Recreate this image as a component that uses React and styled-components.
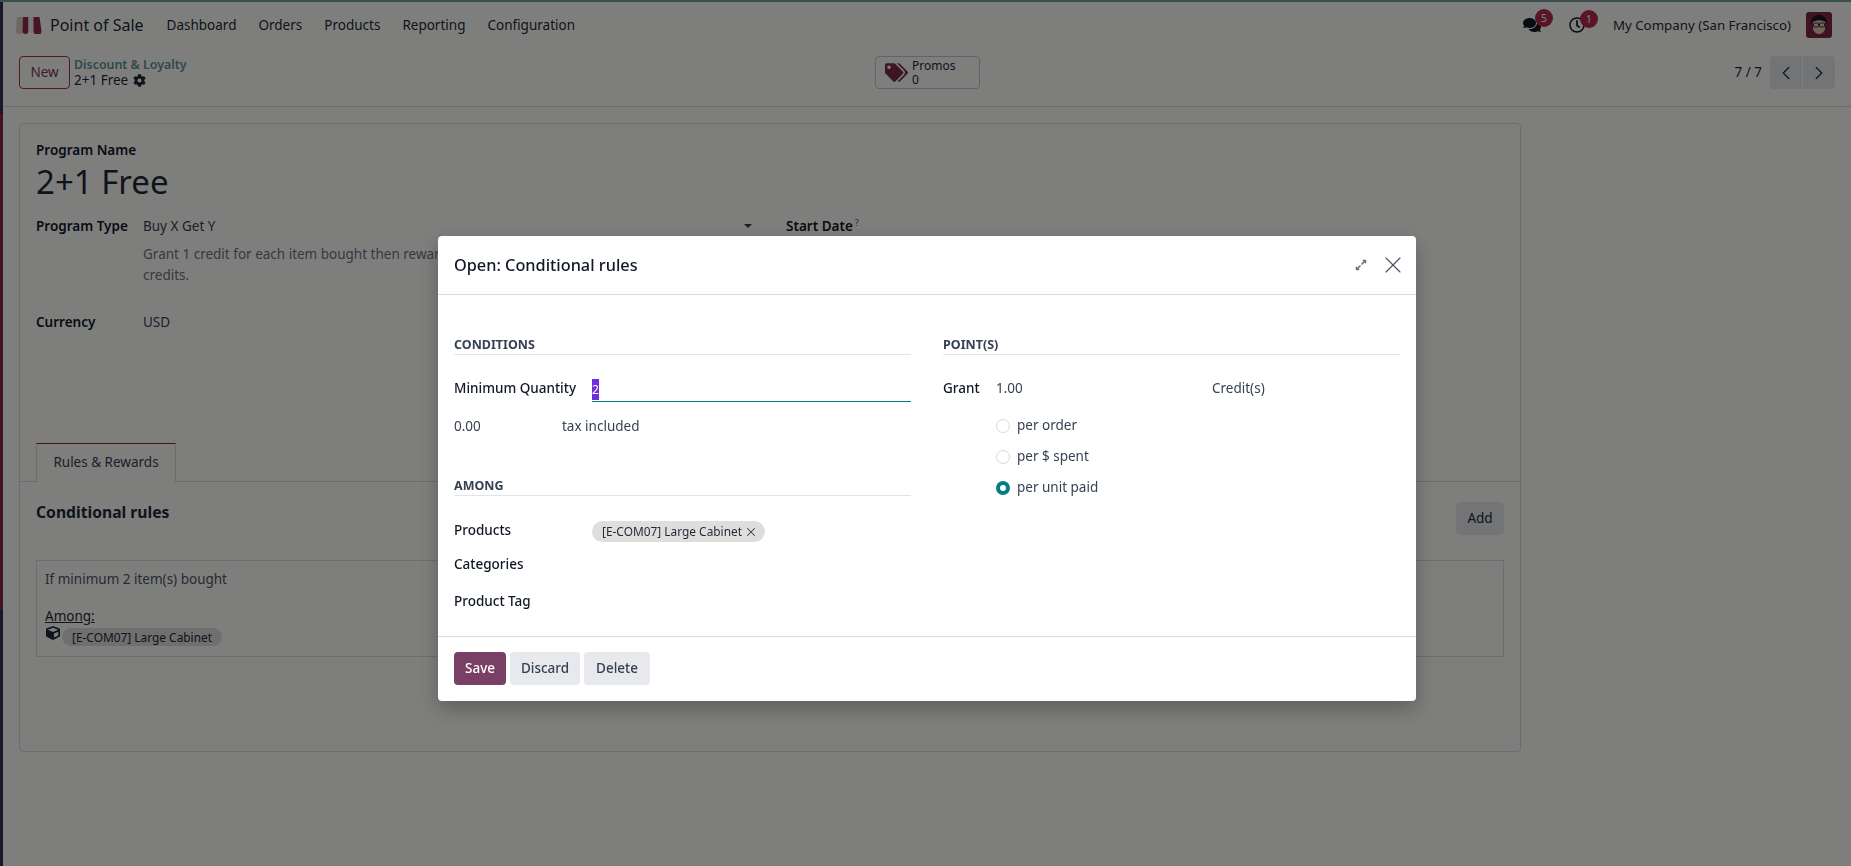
import styled, { createGlobalStyle } from 'styled-components';
import { FaComments, FaRegClock, FaCog, FaTags, FaCube, FaExpandAlt } from 'react-icons/fa';
import { ChevronLeft, ChevronRight, X } from 'lucide-react';

const GlobalStyle = createGlobalStyle`
  html, body {
    margin: 0;
    height: 100%;
    overflow: hidden;
    background: #fdfffb;
    font-family: "Noto Sans", "Open Sans", sans-serif;
    font-size: 13.5px;
    line-height: 21px;
    color: #374151;
  }
  * { box-sizing: border-box; }
`;

const Page = styled.div`
  width: 1851px;
  height: 866px;
  border-left: 3px solid;
  border-image: linear-gradient(#30305a 0 115px, #802545 115px 610px, #30305a 610px) 1;
  position: relative;
`;

const TopStripe = styled.div`
  height: 2px;
  margin-left: -3px;
  background: #7c9c9c;
`;

const Navbar = styled.nav`
  height: 46px;
  display: flex;
  align-items: center;
  padding-left: 12px;
  padding-right: 19px;
`;

const Brand = styled.div`
  display: flex;
  align-items: center;
  gap: 8px;
  font-size: 16px;
  color: #1f2937;
  margin-right: 23px;
`;

const MenuItem = styled.span`
  margin-right: 22px;
  color: #1f2937;
`;

const NavRight = styled.div`
  margin-left: auto;
  display: flex;
  align-items: center;
`;

const NavIcon = styled.span`
  position: relative;
  display: flex;
  color: #111827;
  margin-right: ${(p) => p.$gap}px;
`;

const Badge = styled.span`
  position: absolute;
  top: -7px;
  left: ${(p) => p.$left}px;
  width: 18px;
  height: 18px;
  border-radius: 50%;
  background: #b02a50;
  color: #fff;
  font-size: 10px;
  line-height: 18px;
  text-align: center;
`;

const CompanyName = styled.span`
  color: #1f2937;
  margin-right: 15px;
  font-size: 13.3px;
`;

const ControlPanel = styled.div`
  height: 59px;
  display: grid;
  grid-template-columns: 856px 1fr auto;
  align-items: start;
  padding: 8px 16px 0 16px;
  border-bottom: 1px solid #d8dadd;
`;

const Crumbs = styled.div`
  display: flex;
  gap: 4px;
`;

const NewButton = styled.button`
  width: 51px;
  height: 33px;
  border: 1px solid #a83058;
  border-radius: 4px;
  background: none;
  color: #7a3454;
  font: inherit;
  padding: 0;
`;

const CrumbText = styled.div`
  font-size: 13.5px;
  line-height: 16px;
  padding-top: 1px;
`;

const CrumbLink = styled.div`
  color: #5f8f9a;
  font-weight: 600;
  font-size: 12.4px;
`;

const CrumbCurrent = styled.div`
  display: flex;
  align-items: center;
  gap: 5px;
  margin-top: -1px;
  color: #1f2937;
`;

const PromosButton = styled.div`
  width: 105px;
  height: 33px;
  border: 1px solid #c4c7cc;
  border-radius: 4px;
  display: flex;
  align-items: center;
  gap: 4px;
  padding-left: 9px;
  color: #1f2937;
  font-size: 12px;
  line-height: 14px;
`;

const PromosIcon = styled(FaTags)`
  color: #7a2a4a;
  font-size: 23px;
`;

const Pager = styled.div`
  display: flex;
  align-items: center;
  gap: 1px;
  color: #1f2937;
`;

const PagerCount = styled.span`
  margin-right: 7px;
`;

const PagerButton = styled.div`
  width: 32px;
  height: 33px;
  background: #e7e9ed;
  display: flex;
  align-items: center;
  justify-content: center;
  border-radius: ${(p) => p.$radius};
  color: #1f2937;
`;

const Content = styled.div`
  padding: 16px 0 0 16px;
`;

const Sheet = styled.div`
  width: 1502px;
  height: 629px;
  border: 1px solid #d8dadd;
  border-radius: 4px;
`;

const SheetHead = styled.div`
  padding: 16px 16px 0;
`;

const FieldLabel = styled.div`
  font-weight: 600;
  color: #111827;
  line-height: 20px;
`;

const Title = styled.div`
  font-size: 33px;
  line-height: 45px;
  margin-top: -1px;
  color: #1f2937;
`;

const FormGrid = styled.div`
  display: grid;
  grid-template-columns: 107px 612px 31px 1fr;
  margin-top: 12px;
`;

const Muted = styled.div`
  color: #6b7280;
  margin-top: 8px;
  grid-column: 2 / 5;
  max-width: 600px;
`;

const SelectValue = styled.div`
  display: flex;
  justify-content: space-between;
  align-items: center;
  line-height: 20px;
  color: #374151;
`;

const Caret = styled.span`
  width: 0;
  height: 0;
  border-left: 4px solid transparent;
  border-right: 4px solid transparent;
  border-top: 4px solid #374151;
  margin-right: 3px;
`;

const HelpMark = styled.span`
  font-size: 9px;
  font-weight: 400;
  line-height: 0;
  vertical-align: 5px;
  color: #4b5563;
  margin-left: 2px;
`;

const CurrencyRow = styled.div`
  display: grid;
  grid-template-columns: 107px 1fr;
  margin-top: 26px;
`;

const TabBar = styled.div`
  height: 39px;
  margin-top: 110px;
  padding-left: 16px;
  border-bottom: 1px solid #d8dadd;
  display: flex;
`;

const Tab = styled.div`
  width: 140px;
  height: 39px;
  border: 1px solid #d8dadd;
  border-top-color: #802545;
  border-bottom: none;
  background: #fdfffb;
  text-align: center;
  line-height: 37px;
  color: #374151;
`;

const RulesSection = styled.div`
  padding: 20px 16px 0;
`;

const RulesHead = styled.div`
  display: flex;
  justify-content: space-between;
  align-items: flex-start;
`;

const RulesTitle = styled.div`
  font-size: 15.7px;
  font-weight: 700;
  line-height: 20px;
  color: #1f2937;
`;

const AddButton = styled.button`
  width: 48px;
  height: 33px;
  border: none;
  border-radius: 4px;
  background: #e7e9ed;
  color: #1f2937;
  font: inherit;
  padding: 0;
`;

const RuleBox = styled.div`
  height: 97px;
  margin-top: 25px;
  padding: 8px 8px 0;
  border: 1px solid #d8dadd;
  color: #4b5563;
`;

const AmongLabel = styled.div`
  margin-top: 16px;
  text-decoration: underline;
  color: #1f2937;
`;

const RuleProduct = styled.div`
  display: flex;
  align-items: flex-start;
  gap: 2px;
  margin-top: 1px;
`;

const CubeIcon = styled(FaCube)`
  font-size: 14px;
  color: #1f2937;
  margin: -2px 0 0 1px;
`;

const RulePill = styled.span`
  height: 18px;
  padding: 0 10px;
  border-radius: 9px;
  background: #e0dddd;
  font-size: 11.9px;
  line-height: 19px;
  color: #1f2937;
`;

const Scrim = styled.div`
  position: fixed;
  inset: 0;
  background: rgba(0, 0, 0, 0.5);
`;

const Modal = styled.div`
  position: absolute;
  left: 438px;
  top: 236px;
  width: 978px;
  background: #fff;
  border-radius: 4px;
  box-shadow: 0 8px 20px rgba(0, 0, 0, 0.25);
`;

const ModalHeader = styled.div`
  height: 59px;
  padding: 0 16px;
  display: flex;
  align-items: center;
  justify-content: space-between;
  border-bottom: 1px solid #d8dadd;
`;

const ModalTitle = styled.div`
  font-size: 16.3px;
  font-weight: 500;
  color: #111827;
`;

const HeaderTools = styled.div`
  display: flex;
  align-items: center;
  gap: 19px;
  color: #6b7280;
`;

const CloseIcon = styled(X)`
  margin: -7px;
  color: #4b5563;
`;

const ModalBody = styled.div`
  display: grid;
  grid-template-columns: 457px 457px;
  column-gap: 32px;
  padding: 40px 16px 0;
  height: 341px;
`;

const SectionHead = styled.div`
  height: 20px;
  margin-top: ${(p) => p.$top || 0}px;
  font-size: 12.5px;
  font-weight: 700;
  line-height: 20px;
  text-transform: uppercase;
  color: #374151;
  border-bottom: 1px solid #e2e4e7;
`;

const MinRow = styled.div`
  display: grid;
  grid-template-columns: 138px 1fr;
  margin-top: 24px;
`;

const ModalLabel = styled.div`
  font-weight: 500;
  color: #111827;
  line-height: 21px;
  margin-top: ${(p) => p.$top || 0}px;
`;

const QtyInput = styled.div`
  height: 23px;
  border-bottom: 1px solid #017e84;
  line-height: 21px;
`;

const Selected = styled.span`
  display: inline-block;
  width: 7px;
  height: 21px;
  background: #6f2ddb;
  color: #fff;
  font-size: 12px;
  overflow: hidden;
`;

const AmountRow = styled.div`
  display: grid;
  grid-template-columns: 108px 1fr;
  margin-top: 14px;
  color: #374151;
`;

const ProductsRow = styled.div`
  display: grid;
  grid-template-columns: 138px 1fr;
  margin-top: 25px;
  align-items: center;
`;

const Tag = styled.div`
  width: fit-content;
  height: 21px;
  display: flex;
  align-items: center;
  gap: 5px;
  padding: 0 10px;
  border-radius: 11px;
  background: #e0dddd;
  font-size: 11.9px;
  color: #1f2937;
`;

const TagClose = styled(X)`
  margin: -2px -3px;
  color: #374151;
`;

const GrantRow = styled.div`
  display: grid;
  grid-template-columns: 53px 216px 1fr;
  margin-top: 23px;
  color: #374151;
`;

const RadioList = styled.div`
  margin: 16px 0 0 53px;
  display: flex;
  flex-direction: column;
  gap: 10px;
`;

const RadioRow = styled.div`
  display: flex;
  align-items: center;
  gap: 7px;
  color: #374151;
`;

const RadioDot = styled.span`
  width: 14px;
  height: 14px;
  border-radius: 50%;
  border: ${(p) => (p.$on ? '4px solid #017e84' : '1px solid #d8dadd')};
  background: #fff;
`;

const ModalFooter = styled.div`
  display: flex;
  gap: 4px;
  padding: 15px 16px 16px;
  border-top: 1px solid #d8dadd;
`;

const FootButton = styled.button`
  height: 33px;
  width: ${(p) => p.$w}px;
  border: none;
  border-radius: 4px;
  padding: 0;
  font: inherit;
  font-weight: 500;
  background: ${(p) => (p.$primary ? '#7a3f65' : '#e7e9ed')};
  color: ${(p) => (p.$primary ? '#fff' : '#374151')};
`;

const Awning = () => (
  <svg width="27" height="18" viewBox="0 0 27 18">
    <path d="M2 1h6v14a3 3 0 0 1-7 0z" fill="#d8cfc2" />
    <path d="M8 1h5.5v14a2.8 2.8 0 0 1-6 0z" fill="#902a50" />
    <path d="M13.5 1h5v14a2.6 2.6 0 0 1-5 0z" fill="#f0ebe4" />
    <path d="M18.5 1h6l2 14a3.5 3.5 0 0 1-8 0z" fill="#902a50" />
  </svg>
);

const Avatar = () => (
  <svg width="26" height="26" viewBox="0 0 26 26">
    <rect width="26" height="26" rx="3" fill="#802545" />
    <path d="M5 12c0-7 4-9 8-9s8 2 8 9l-2-3-5-1-6 1z" fill="#141420" />
    <path d="M7 10c2-2 10-2 12 0v7c-1 4-4 5-6 5s-5-1-6-5z" fill="#e8c8b8" />
    <rect x="7.5" y="11" width="5" height="4" rx="1" fill="none" stroke="#333" />
    <rect x="13.5" y="11" width="5" height="4" rx="1" fill="none" stroke="#333" />
  </svg>
);

export default function App() {
  return (
    <>
      <GlobalStyle />
      <Page>
        <TopStripe />
        <Navbar>
          <Brand>
            <Awning />
            Point of Sale
          </Brand>
          <MenuItem>Dashboard</MenuItem>
          <MenuItem>Orders</MenuItem>
          <MenuItem>Products</MenuItem>
          <MenuItem>Reporting</MenuItem>
          <MenuItem>Configuration</MenuItem>
          <NavRight>
            <NavIcon $gap={28}>
              <FaComments size={18} />
              <Badge $left={12}>5</Badge>
            </NavIcon>
            <NavIcon $gap={28}>
              <FaRegClock size={16} />
              <Badge $left={11}>1</Badge>
            </NavIcon>
            <CompanyName>My Company (San Francisco)</CompanyName>
            <Avatar />
          </NavRight>
        </Navbar>
        <ControlPanel>
          <Crumbs>
            <NewButton>New</NewButton>
            <CrumbText>
              <CrumbLink>Discount &amp; Loyalty</CrumbLink>
              <CrumbCurrent>
                2+1 Free <FaCog size={13} />
              </CrumbCurrent>
            </CrumbText>
          </Crumbs>
          <div>
            <PromosButton>
              <PromosIcon />
              <div>
                Promos
                <br />0
              </div>
            </PromosButton>
          </div>
          <Pager>
            <PagerCount>7 / 7</PagerCount>
            <PagerButton $radius="4px 0 0 4px">
              <ChevronLeft size={22} strokeWidth={1.3} />
            </PagerButton>
            <PagerButton $radius="0 4px 4px 0">
              <ChevronRight size={22} strokeWidth={1.3} />
            </PagerButton>
          </Pager>
        </ControlPanel>
        <Content>
          <Sheet>
            <SheetHead>
              <FieldLabel>Program Name</FieldLabel>
              <Title>2+1 Free</Title>
              <FormGrid>
                <FieldLabel>Program Type</FieldLabel>
                <SelectValue>
                  Buy X Get Y
                  <Caret />
                </SelectValue>
                <span />
                <FieldLabel>
                  Start Date<HelpMark>?</HelpMark>
                </FieldLabel>
                <Muted>
                  Grant 1 credit for each item bought then reward the customer with Y items in exchange of X
                  credits.
                </Muted>
              </FormGrid>
              <CurrencyRow>
                <FieldLabel>Currency</FieldLabel>
                <div>USD</div>
              </CurrencyRow>
            </SheetHead>
            <TabBar>
              <Tab>Rules &amp; Rewards</Tab>
            </TabBar>
            <RulesSection>
              <RulesHead>
                <RulesTitle>Conditional rules</RulesTitle>
                <AddButton>Add</AddButton>
              </RulesHead>
              <RuleBox>
                <div>If minimum 2 item(s) bought</div>
                <AmongLabel>Among:</AmongLabel>
                <RuleProduct>
                  <CubeIcon />
                  <RulePill>[E-COM07] Large Cabinet</RulePill>
                </RuleProduct>
              </RuleBox>
            </RulesSection>
          </Sheet>
        </Content>
        <Scrim>
          <Modal>
            <ModalHeader>
              <ModalTitle>Open: Conditional rules</ModalTitle>
              <HeaderTools>
                <FaExpandAlt size={12} />
                <CloseIcon size={28} strokeWidth={1} />
              </HeaderTools>
            </ModalHeader>
            <ModalBody>
              <div>
                <SectionHead>Conditions</SectionHead>
                <MinRow>
                  <ModalLabel $top={-1}>Minimum Quantity</ModalLabel>
                  <QtyInput>
                    <Selected>2</Selected>
                  </QtyInput>
                </MinRow>
                <AmountRow>
                  <div>0.00</div>
                  <div>tax included</div>
                </AmountRow>
                <SectionHead $top={39}>Among</SectionHead>
                <ProductsRow>
                  <ModalLabel $top={-2}>Products</ModalLabel>
                  <Tag>
                    [E-COM07] Large Cabinet
                    <TagClose size={14} strokeWidth={1.8} />
                  </Tag>
                </ProductsRow>
                <ModalLabel $top={12}>Categories</ModalLabel>
                <ModalLabel $top={16}>Product Tag</ModalLabel>
              </div>
              <div>
                <SectionHead>Point(s)</SectionHead>
                <GrantRow>
                  <ModalLabel>Grant</ModalLabel>
                  <div>1.00</div>
                  <div>Credit(s)</div>
                </GrantRow>
                <RadioList>
                  <RadioRow>
                    <RadioDot />
                    per order
                  </RadioRow>
                  <RadioRow>
                    <RadioDot />
                    per $ spent
                  </RadioRow>
                  <RadioRow>
                    <RadioDot $on />
                    per unit paid
                  </RadioRow>
                </RadioList>
              </div>
            </ModalBody>
            <ModalFooter>
              <FootButton $primary $w={52}>
                Save
              </FootButton>
              <FootButton $w={70}>Discard</FootButton>
              <FootButton $w={66}>Delete</FootButton>
            </ModalFooter>
          </Modal>
        </Scrim>
      </Page>
    </>
  );
}
